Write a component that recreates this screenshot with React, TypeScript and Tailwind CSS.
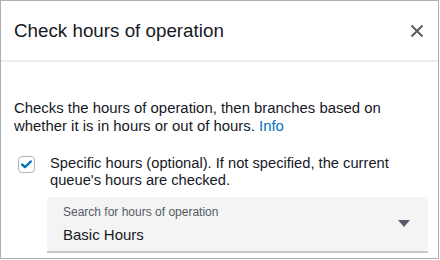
export default function App() {
  return (
    <div className="w-[440px] h-[260px] bg-white font-['Liberation_Sans',Arial,sans-serif] text-[#16191f]">
      <div className="w-[439px] h-[259px] border border-[#aab0b4] flex flex-col">
        <div className="h-[61px] flex items-center justify-between pl-[13px] pr-[11px] border-b-2 border-[#eaeded]">
          <h1 className="text-[18.8px] leading-none pt-[2px]">Check hours of operation</h1>
          <button className="w-[20px] h-[20px] flex items-center justify-center">
            <svg width="14" height="14" viewBox="0 0 14 14">
              <path d="M1.5 1.5 L12.5 12.5 M12.5 1.5 L1.5 12.5" stroke="#545b64" strokeWidth="2" fill="none" />
            </svg>
          </button>
        </div>
        <div className="pl-[13px] pr-[10px] pt-[37px]">
          <p className="text-[14.9px] leading-[18px]">
            Checks the hours of operation, then branches based on whether it is in hours or out of hours.{" "}
            <a className="text-[#0073bb]">Info</a>
          </p>
          <div className="flex mt-[20px]">
            <div className="w-[17px] h-[17px] mt-[1px] ml-[4px] rounded-[4px] border border-[#aab7b8] flex items-center justify-center shrink-0">
              <svg width="11" height="9" viewBox="0 0 11 9">
                <path d="M1.2 4.6 L4 7.2 L9.8 1.5" stroke="#0073bb" strokeWidth="2.4" fill="none" strokeLinecap="round" strokeLinejoin="round" />
              </svg>
            </div>
            <p className="ml-[15px] text-[14.7px] leading-[17px]">
              Specific hours (optional). If not specified, the current queue's hours are checked.
            </p>
          </div>
          <div className="ml-[33px] mt-[8px] h-[56px] bg-[#f4f4f4] border-b-2 border-[#c5c9cc] flex items-center justify-between pl-[16px] pr-[18px]">
            <div className="flex flex-col">
              <span className="text-[12px] leading-[14px] text-[#545b64]">Search for hours of operation</span>
              <span className="text-[15px] leading-[18px] mt-[7px]">Basic Hours</span>
            </div>
            <svg width="12" height="7" viewBox="0 0 12 7" className="mb-[2px]">
              <path d="M0 0 L12 0 L6 7 Z" fill="#545b64" />
            </svg>
          </div>
        </div>
      </div>
    </div>
  );
}
